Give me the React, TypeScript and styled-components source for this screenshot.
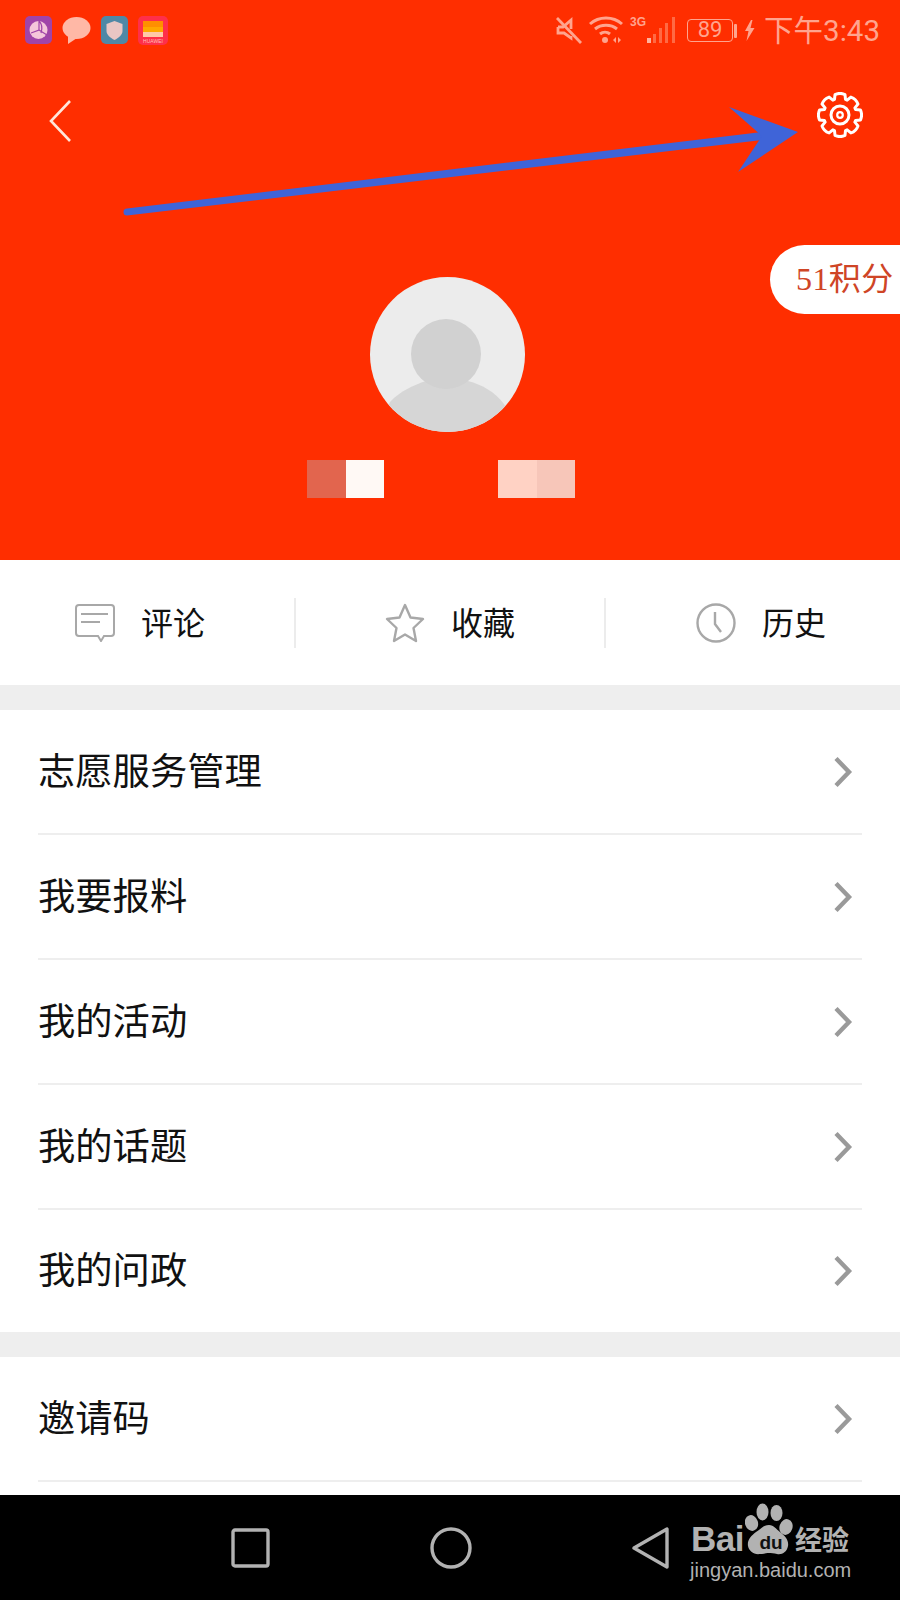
import React from "react";
import styled, { createGlobalStyle } from "styled-components";

const GlobalStyle = createGlobalStyle`
  html, body {
    margin: 0;
    padding: 0;
    background: #fff;
  }
  body {
    font-family: "Noto Sans CJK SC", "Liberation Sans", sans-serif;
  }
`;

const Page = styled.div`
  position: relative;
  width: 900px;
  height: 1600px;
  display: flex;
  flex-direction: column;
  overflow: hidden;
  background: #fff;
`;

const Header = styled.header`
  position: relative;
  height: 560px;
  flex: none;
  background: #ff2e00;
  display: flex;
  flex-direction: column;
  align-items: center;
`;

const StatusBar = styled.div`
  align-self: stretch;
  height: 60px;
  padding: 16px 20px 0 25px;
  box-sizing: border-box;
  display: flex;
  align-items: flex-start;
  justify-content: space-between;
`;

const StatusGroup = styled.div<{ $gap: number }>`
  display: flex;
  align-items: flex-start;
  gap: ${(p) => p.$gap}px;
`;

const Clock = styled.span`
  font-family: "Roboto", "Noto Sans CJK SC", sans-serif;
  font-size: 29.5px;
  line-height: 30px;
  color: #ffa48e;
  margin-left: 7px;
`;

const Battery = styled.div`
  width: 46px;
  height: 23px;
  margin: 3px 0 0 11px;
  box-sizing: border-box;
  border: 1.5px solid #ffa48e;
  border-radius: 4px;
  color: #ffa48e;
  font: 22px/20px "Roboto", sans-serif;
  text-align: center;
`;

const NetworkType = styled.span`
  width: 16px;
  margin-left: 7px;
  font: bold 12px/13px "Liberation Sans", sans-serif;
  color: #ffa48e;
`;

const NavRow = styled.div`
  align-self: stretch;
  height: 80px;
  padding: 32px 37px 0 49px;
  box-sizing: border-box;
  display: flex;
  justify-content: space-between;
  align-items: flex-start;
`;

const BackIcon = styled.svg`
  margin-top: 8px;
`;

const Avatar = styled.div`
  width: 155px;
  height: 155px;
  margin: 137px 5px 0 0;
  border-radius: 50%;
  overflow: hidden;
  flex: none;
`;

const NameBlur = styled.div`
  margin: 28px 18px 0 0;
  display: flex;
  width: 268px;
`;

const NamePixel = styled.div<{ $color: string }>`
  width: 38.5px;
  height: 38px;
  background: ${(p) => p.$color};
`;

const Spacer = styled.div`
  flex: 1;
`;

const PointsPill = styled.div`
  position: absolute;
  top: 245px;
  right: 0;
  width: 130px;
  height: 69px;
  box-sizing: border-box;
  padding-left: 26px;
  border-radius: 35px 0 0 35px;
  background: #fff;
  color: #cf4526;
  font-family: "Liberation Serif", "Noto Sans CJK SC", serif;
  font-size: 32px;
  line-height: 69px;
  letter-spacing: 0.4px;
  white-space: nowrap;
`;

const Annotation = styled.svg`
  position: absolute;
  top: 0;
  left: 0;
  pointer-events: none;
`;

const Tabs = styled.nav`
  height: 125px;
  flex: none;
  display: grid;
  grid-template-columns: 295px 310px 295px;
  align-items: center;
  background: #fff;
`;

const Tab = styled.div<{ $pad: number; $divider?: boolean }>`
  height: 50px;
  padding: 0 0 0 ${(p) => p.$pad}px;
  display: flex;
  align-items: center;
  gap: 26px;
  font-size: 32px;
  color: #111;
  box-shadow: ${(p) =>
    p.$divider ? "inset 1px 0 0 #ececec, -1px 0 0 #ececec" : "none"};
`;

const TabLabel = styled.span`
  line-height: 44px;
  margin-top: -4px;
`;

const Gap = styled.div`
  height: 25px;
  flex: none;
  background: #eee;
`;

const Rows = styled.section`
  flex: none;
  padding: 0 38px;
  background: #fff;
`;

const Row = styled.div<{ $last?: boolean }>`
  height: ${(p) => (p.$last ? 122 : 125)}px;
  box-sizing: border-box;
  display: flex;
  align-items: center;
  justify-content: space-between;
  padding-right: 9px;
  font-size: 37.3px;
  color: #111;
  border-bottom: ${(p) => (p.$last ? "none" : "2px solid #eee")};
`;

const RowLabel = styled.span`
  line-height: 52px;
  margin-top: -6px;
`;

const BottomRows = styled(Rows)`
  flex: 1;
`;

const SystemBar = styled.div`
  position: relative;
  height: 105px;
  flex: none;
  background: #000;
  display: flex;
  align-items: center;
  padding: 0 0 0 231px;
  gap: 160px;
  box-sizing: border-box;
`;

const Watermark = styled.div`
  position: absolute;
  left: 690px;
  top: 8px;
  width: 165px;
  height: 80px;
  color: #b2b2b2;
`;

const LogoBai = styled.span`
  position: absolute;
  left: 1px;
  top: 18px;
  font: bold 35px/35px "Liberation Sans", sans-serif;
  letter-spacing: -0.5px;
`;

const LogoPaw = styled.svg`
  position: absolute;
  left: 55px;
  top: 0;
`;

const LogoCn = styled.span`
  position: absolute;
  left: 105px;
  top: 20px;
  font-size: 27px;
  line-height: 32px;
  font-weight: 700;
  white-space: nowrap;
`;

const LogoUrl = styled.span`
  position: absolute;
  left: 0;
  top: 55px;
  font: 20px/24px "Liberation Sans", sans-serif;
  white-space: nowrap;
`;

// eight rounded teeth around the middle of a 46px box
const gearPath = () => {
  const pts: string[] = [];
  for (let i = 0; i < 8; i++) {
    const a = (i * Math.PI) / 4;
    const at = (r: number, d: number) =>
      `${(23 + r * Math.cos(a + d)).toFixed(2)} ${(23 + r * Math.sin(a + d)).toFixed(2)}`;
    pts.push(`${i === 0 ? "M" : "L"}${at(16.5, -0.34)}`);
    pts.push(`L${at(21, -0.24)}`);
    pts.push(`Q${at(22.8, 0)} ${at(21, 0.24)}`);
    pts.push(`L${at(16.5, 0.34)}`);
  }
  return pts.join(" ") + "Z";
};

const Chevron = () => (
  <svg width="20" height="34" viewBox="0 0 20 34" fill="none">
    <path d="M3 3.500l13 13.500L3 30.500" stroke="#9a9a9a" strokeWidth="4.400" />
  </svg>
);

const AppBadges = () => (
  <StatusGroup $gap={10}>
    <svg width="27" height="28" viewBox="0 0 27 28">
      <rect width="27" height="28" rx="5" fill="#a044a8" />
      <circle cx="13.500" cy="14" r="9" fill="#f5c6da" />
      <path d="M14 5v9l-8 3M14 14l8 5M14 5c3 3 4 6 2 12" stroke="#a044a8" strokeWidth="1.200" fill="none" />
    </svg>
    <svg width="29" height="28" viewBox="0 0 29 28">
      <ellipse cx="14.500" cy="12" rx="14" ry="11" fill="#ffb8a6" />
      <path d="M6 19l0 9 9-6z" fill="#ffb8a6" />
    </svg>
    <svg width="27" height="28" viewBox="0 0 27 28">
      <rect width="27" height="28" rx="5" fill="#4f88a6" />
      <path d="M13.500 5l8 3v7c0 4-4 7-8 9-4-2-8-5-8-9V8z" fill="#e9c6c4" />
    </svg>
    <svg width="30" height="29" viewBox="0 0 30 29">
      <rect width="30" height="29" rx="5" fill="#ff2f4a" />
      <rect x="5" y="5" width="20" height="6" fill="#ff8f00" />
      <rect x="5" y="11" width="20" height="5" fill="#ffa800" />
      <rect x="5" y="16" width="20" height="5" fill="#ffc8a8" />
      <text x="15" y="27" textAnchor="middle" fontFamily="Liberation Sans" fontSize="5" fill="#ffc0b8">HUAWEI</text>
    </svg>
  </StatusGroup>
);

const SystemIcons = () => (
  <StatusGroup $gap={0}>
    <svg width="28" height="28" viewBox="0 0 28 28" fill="none" stroke="#ffa48e" strokeWidth="2.800">
      <path d="M3 11h5l8-7v9M16 20v2l-7-5H3v-6" />
      <path d="M2 2l24 25" />
    </svg>
    <svg width="34" height="28" viewBox="0 0 34 28" fill="none" stroke="#ffa48e" strokeWidth="3" style={{ marginLeft: 6 }}>
      <path d="M1 8c9-8 23-8 32 0M6 13c6-5 16-5 22 0M11 18c3-2.500 7-2.500 10 0" />
      <circle cx="16" cy="24" r="3" fill="#ffa48e" stroke="none" />
      <path d="M27 21v6l-3-3zM29 21v6l3-3z" fill="#ffa48e" stroke="none" />
    </svg>
    <NetworkType>3G</NetworkType>
    <svg width="30" height="28" viewBox="16 0 30 28">
      <rect x="17" y="22" width="4" height="5" fill="#ffb39f" />
      <rect x="23" y="18" width="3" height="9" fill="#ff6a44" />
      <rect x="29" y="12" width="3" height="15" fill="#ff6a44" />
      <rect x="35" y="7" width="3" height="20" fill="#ff6a44" />
      <rect x="42" y="1" width="3" height="26" fill="#ff6a44" />
    </svg>
    <Battery>89</Battery>
    <svg width="24" height="28" viewBox="0 0 24 28">
      <rect x="1" y="8" width="3" height="14" rx="1" fill="#ffa48e" />
      <path d="M18 4l-6 11h3.500l-2 10 8-13h-4l2-8z" fill="#ffa48e" />
    </svg>
    <Clock>下午3:43</Clock>
  </StatusGroup>
);

const Gear = () => (
  <svg width="46" height="46" viewBox="0 0 46 46" fill="none" stroke="#fff" strokeWidth="3" strokeLinejoin="round">
    <path d={gearPath()} />
    <circle cx="23" cy="23" r="9" />
    <circle cx="23" cy="23" r="2.800" strokeWidth="2.200" />
  </svg>
);

const items = ["志愿服务管理", "我要报料", "我的活动", "我的话题", "我的问政"];

export default function App() {
  return (
    <Page>
      <GlobalStyle />
      <Header>
        <StatusBar>
          <AppBadges />
          <SystemIcons />
        </StatusBar>
        <NavRow>
          <BackIcon width="22" height="42" viewBox="0 0 22 42" fill="none">
            <path d="M21 1L2 21l19 20" stroke="#ffe6da" strokeWidth="2.600" />
          </BackIcon>
          <Gear />
        </NavRow>
        <Avatar>
          <svg width="155" height="155" viewBox="0 0 155 155">
            <rect width="155" height="155" fill="#ececec" />
            <path d="M20 125C30 114 44 108 56 104H98C112 108 124 114 134 127L150 155H5Z" fill="#d6d6d6" />
            <circle cx="76" cy="77" r="35" fill="#d1d1d1" />
          </svg>
        </Avatar>
        <NameBlur>
          <NamePixel $color="#e2654e" />
          <NamePixel $color="#fff9f5" />
          <Spacer />
          <NamePixel $color="#ffd2c4" />
          <NamePixel $color="#f7c6b9" />
        </NameBlur>
        <PointsPill>51积分</PointsPill>
      </Header>

      <Tabs>
        <Tab $pad={75}>
          <svg width="40" height="38" viewBox="0 0 40 38" fill="none" stroke="#a8a8a8" strokeWidth="2">
            <path d="M4 1h32a3 3 0 0 1 3 3v25a3 3 0 0 1-3 3H29l-3 5-3-5H4a3 3 0 0 1-3-3V4a3 3 0 0 1 3-3z" />
            <path d="M6 10h27M6 18h19" />
          </svg>
          <TabLabel>评论</TabLabel>
        </Tab>
        <Tab $pad={90} $divider>
          <svg width="40" height="40" viewBox="0 0 40 40" fill="none" stroke="#a8a8a8" strokeWidth="2.400" strokeLinejoin="round">
            <path d="M20 2l5.500 12.500L38 16l-9.500 9 2.500 13-11-6.500L9 38l2.500-13L2 16l12.500-1.500z" />
          </svg>
          <TabLabel>收藏</TabLabel>
        </Tab>
        <Tab $pad={91} $divider>
          <svg width="40" height="40" viewBox="0 0 40 40" fill="none" stroke="#a8a8a8" strokeWidth="2.400">
            <circle cx="20" cy="20" r="18.500" />
            <path d="M19 9v12l6 8" />
          </svg>
          <TabLabel>历史</TabLabel>
        </Tab>
      </Tabs>
      <Gap />
      <Rows>
        {items.map((label, i) => (
          <Row key={label} $last={i === items.length - 1}>
            <RowLabel>{label}</RowLabel>
            <Chevron />
          </Row>
        ))}
      </Rows>
      <Gap />
      <BottomRows>
        <Row>
          <RowLabel>邀请码</RowLabel>
          <Chevron />
        </Row>
      </BottomRows>

      <SystemBar>
        <svg width="39" height="40" viewBox="0 0 39 40" fill="none" stroke="#b2b2b2" strokeWidth="3.400">
          <rect x="2" y="2" width="35" height="36" rx="2" />
        </svg>
        <svg width="42" height="42" viewBox="0 0 42 42" fill="none" stroke="#b2b2b2" strokeWidth="3.400">
          <circle cx="21" cy="21" r="19" />
        </svg>
        <svg width="38" height="42" viewBox="0 0 38 42" fill="none" stroke="#b2b2b2" strokeWidth="3.400" strokeLinejoin="round">
          <path d="M35 2v38L2 21z" />
        </svg>
        <Watermark>
          <LogoBai>Bai</LogoBai>
          <LogoPaw width="50" height="54" viewBox="0 0 50 54">
            <ellipse cx="17.500" cy="9" rx="6" ry="8.500" fill="#b2b2b2" />
            <ellipse cx="31.500" cy="10" rx="6" ry="8" fill="#b2b2b2" />
            <ellipse cx="6.500" cy="20" rx="6.500" ry="8" fill="#b2b2b2" transform="rotate(-18 6.500 20)" />
            <ellipse cx="41" cy="24" rx="6.500" ry="8" fill="#b2b2b2" transform="rotate(18 41 24)" />
            <path d="M24 22c5 0 7 4 11 7 5 4 9 8 8 14-1 6-6 9-11 8-3-1-6-1-8-1s-6 1-9 1c-6 1-11-3-12-8-1-6 3-10 8-14 5-3 7-7 13-7z" fill="#b2b2b2" />
            <text x="26" y="46" textAnchor="middle" fontFamily="Liberation Sans" fontWeight="700" fontSize="19" fill="#111">du</text>
          </LogoPaw>
          <LogoCn>经验</LogoCn>
          <LogoUrl>jingyan.baidu.com</LogoUrl>
        </Watermark>
      </SystemBar>

      <Annotation width="900" height="240" viewBox="0 0 900 240">
        <path d="M127 208.500L762 132v8L127 215.500a3.500 3.500 0 0 1 0-7z" fill="#3f64d8" />
        <path d="M729 107L798 132 738 172 762 136z" fill="#3f64d8" />
      </Annotation>
    </Page>
  );
}
